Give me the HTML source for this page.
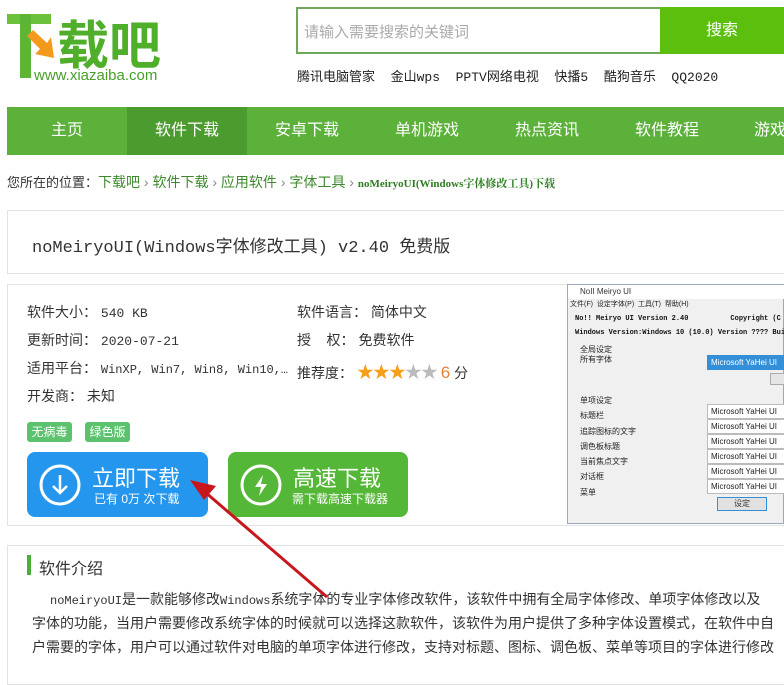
<!DOCTYPE html>
<html><head><meta charset="utf-8"><style>
*{margin:0;padding:0;box-sizing:border-box}
body{width:784px;height:650px;overflow:hidden;background:#fff;font-family:"Liberation Sans","Noto Sans CJK SC",sans-serif;color:#333;position:relative}
.a{position:absolute;white-space:nowrap}
.mono{font-family:"Liberation Mono","Noto Sans CJK SC",monospace}
.nav{position:absolute;left:7px;top:107px;width:777px;height:48px;background:#5cb13b}
.nav span{position:absolute;top:0;width:120px;height:48px;line-height:48px;text-align:center;color:#fff;font-size:16px}
.box{position:absolute;border:1px solid #e3e3e3}
.lbl{font-size:14px;color:#333}
.inp{position:absolute;left:624px;width:160px;height:15px;border:1px solid #bbb;background:#fff;font-size:8px;line-height:13px;padding-left:3px;color:#222}
</style></head><body>
<!-- logo -->
<svg class="a" style="left:7px;top:10px" width="170" height="72">
<rect x="0" y="4" width="44" height="10" fill="#6cc13b"/><rect x="13" y="4" width="11" height="64" fill="#5db536"/>
<polygon points="26,20 40,33 44,27 47,48 28,44 33,39 20,26" fill="#f39a1d"/>
<text x="50" y="54" font-size="52" font-weight="bold" fill="#4fae2a" font-family="Noto Sans CJK SC">载吧</text>
<text x="27" y="70" font-size="15" fill="#4a9e2a" font-family="Liberation Sans">www.xiazaiba.com</text>
</svg>
<div class="a" style="left:296px;top:7px;width:366px;height:47px;border:2px solid #6fa85a"></div>
<div class="a" style="left:304px;top:21px;font-size:15px;color:#aaa">请输入需要搜索的关键词</div>
<div class="a" style="left:660px;top:7px;width:124px;height:47px;background:#5cbf0e;color:#fff;font-size:16px;line-height:47px;text-align:center">搜索</div>
<div class="a mono" style="left:297px;top:66px;font-size:13px;color:#222">腾讯电脑管家&nbsp; 金山wps&nbsp; PPTV网络电视&nbsp; 快播5&nbsp; 酷狗音乐&nbsp; QQ2020</div>
<div class="nav">
<span style="left:0">主页</span><span style="left:120px;background:#4c9b2e">软件下载</span><span style="left:240px">安卓下载</span><span style="left:360px">单机游戏</span><span style="left:480px">热点资讯</span><span style="left:600px">软件教程</span><span style="left:720px;text-align:left;padding-left:27px">游戏</span>
</div>
<div class="a" style="left:7px;top:172px;font-size:13px;color:#333">您所在的位置：<span style="color:#3c8a2b;font-size:14px">下载吧 <span style="color:#888">›</span> 软件下载 <span style="color:#888">›</span> 应用软件 <span style="color:#888">›</span> 字体工具 <span style="color:#888">›</span> </span><b style="font-family:'Liberation Serif','Noto Serif CJK SC',serif;color:#2e7d22;font-size:11px">noMeiryoUI(Windows字体修改工具)下载</b></div>
<div class="box" style="left:7px;top:210px;width:790px;height:64px"></div>
<div class="a mono" style="left:32px;top:232px;font-size:17px;color:#333">noMeiryoUI(Windows字体修改工具) v2.40 免费版</div>
<div class="box" style="left:7px;top:284px;width:790px;height:242px"></div>
<div class="a lbl" style="left:27px;top:302px">软件大小： <span class="mono" style="font-size:13px">540 KB</span></div>
<div class="a lbl" style="left:27px;top:330px">更新时间： <span class="mono" style="font-size:13px">2020-07-21</span></div>
<div class="a lbl" style="left:27px;top:358px">适用平台： <span class="mono" style="font-size:12px">WinXP, Win7, Win8, Win10,…</span></div>
<div class="a lbl" style="left:27px;top:386px">开发商： 未知</div>
<div class="a lbl" style="left:297px;top:302px">软件语言： 简体中文</div>
<div class="a lbl" style="left:297px;top:330px">授&nbsp;&nbsp;&nbsp; 权： 免费软件</div>
<div class="a lbl" style="left:297px;top:358px">推荐度： <span style="color:#f5a01a;font-size:17px;letter-spacing:-1px">★★★</span><span style="color:#bbb;font-size:17px;letter-spacing:-1px">★★</span> <span style="color:#e5823a;font-size:17px">6</span> 分</div>
<div class="a" style="left:27px;top:422px;width:45px;height:20px;background:#5cc26d;border-radius:3px;color:#fff;font-size:12px;line-height:20px;text-align:center">无病毒</div>
<div class="a" style="left:85px;top:422px;width:45px;height:20px;background:#5cc26d;border-radius:3px;color:#fff;font-size:12px;line-height:20px;text-align:center">绿色版</div>
<div class="a" style="left:27px;top:452px;width:181px;height:65px;background:#2596ee;border-radius:8px"></div>
<svg class="a" style="left:38px;top:463px" width="44" height="44"><circle cx="22" cy="22" r="19" fill="none" stroke="#fff" stroke-width="3"/><path d="M22 12v18M15 23l7 7 7-7" fill="none" stroke="#fff" stroke-width="2.5"/></svg>
<div class="a" style="left:92px;top:461px;font-size:22px;color:#fff">立即下载</div>
<div class="a" style="left:94px;top:490px;font-size:12px;color:#fff">已有 0万 次下载</div>
<div class="a" style="left:228px;top:452px;width:180px;height:65px;background:#55b738;border-radius:8px"></div>
<svg class="a" style="left:239px;top:463px" width="44" height="44"><circle cx="22" cy="22" r="19" fill="none" stroke="#fff" stroke-width="3"/><path d="M24 12l-8 12h6l-2 9 8-12h-6z" fill="#fff"/></svg>
<div class="a" style="left:293px;top:461px;font-size:22px;color:#fff">高速下载</div>
<div class="a" style="left:292px;top:490px;font-size:12px;color:#fff">需下载高速下载器</div>
<!-- screenshot -->
<div class="a" style="left:567px;top:284px;width:217px;height:240px;background:#f0f0f0;border:1px solid #9ab"></div>
<div class="a" style="left:568px;top:285px;width:216px;height:14px;background:#fff;font-size:8px;line-height:14px;padding-left:12px;color:#333">NoII Meiryo UI</div>
<div class="a" style="left:570px;top:299px;font-size:7px;color:#222">文件(F)&nbsp; 设定字体(P)&nbsp; 工具(T)&nbsp; 帮助(H)</div>
<div class="a mono" style="left:575px;top:315px;font-size:7px;font-weight:bold;color:#111">No!! Meiryo UI Version 2.40&nbsp;&nbsp;&nbsp;&nbsp;&nbsp;&nbsp;&nbsp;&nbsp;&nbsp; Copyright (C</div>
<div class="a mono" style="left:575px;top:329px;font-size:7px;font-weight:bold;color:#111">Windows Version:Windows 10 (10.0) Version ???? Buil</div>
<div class="a" style="left:580px;top:345px;font-size:8px;line-height:10px;color:#222">全局设定<br>所有字体</div>
<div class="inp" style="left:707px;top:355px;background:#3390d8;color:#fff;border-color:#3390d8">Microsoft YaHei UI</div>
<div class="a" style="left:770px;top:373px;width:16px;height:12px;border:1px solid #aaa;background:#e5e5e5"></div>
<div class="a" style="left:580px;top:393px;font-size:8px;line-height:15.3px;color:#222">单项设定<br>标题栏<br>追踪图标的文字<br>调色板标题<br>当前焦点文字<br>对话框<br>菜单</div>
<div class="inp" style="left:707px;top:404px">Microsoft YaHei UI</div>
<div class="inp" style="left:707px;top:419px">Microsoft YaHei UI</div>
<div class="inp" style="left:707px;top:434px">Microsoft YaHei UI</div>
<div class="inp" style="left:707px;top:449px">Microsoft YaHei UI</div>
<div class="inp" style="left:707px;top:464px">Microsoft YaHei UI</div>
<div class="inp" style="left:707px;top:479px">Microsoft YaHei UI</div>
<div class="a" style="left:717px;top:497px;width:50px;height:14px;border:1px solid #3390d8;background:#e1e1e1;font-size:8px;text-align:center;line-height:12px">设定</div>
<!-- intro -->
<div class="box" style="left:7px;top:545px;width:790px;height:140px"></div>
<div class="a" style="left:27px;top:555px;width:4px;height:20px;background:#4bb03a"></div>
<div class="a" style="left:39px;top:555px;font-size:16px;color:#333">软件介绍</div>
<div class="a" style="left:50px;top:589px;font-size:14px;color:#333"><span class="mono" style="font-size:12px">noMeiryoUI</span>是一款能够修改<span class="mono" style="font-size:12px">Windows</span>系统字体的专业字体修改软件，该软件中拥有全局字体修改、单项字体修改以及</div>
<div class="a" style="left:32px;top:613px;font-size:14px;color:#333">字体的功能，当用户需要修改系统字体的时候就可以选择这款软件，该软件为用户提供了多种字体设置模式，在软件中自</div>
<div class="a" style="left:32px;top:637px;font-size:14px;color:#333">户需要的字体，用户可以通过软件对电脑的单项字体进行修改，支持对标题、图标、调色板、菜单等项目的字体进行修改</div>
<!-- arrow -->
<svg class="a" style="left:0;top:0" width="784" height="650"><line x1="327" y1="597" x2="205" y2="492" stroke="#c8171c" stroke-width="3"/><polygon points="190,480 216,486 204,500" fill="#c8171c"/></svg>
</body></html>
